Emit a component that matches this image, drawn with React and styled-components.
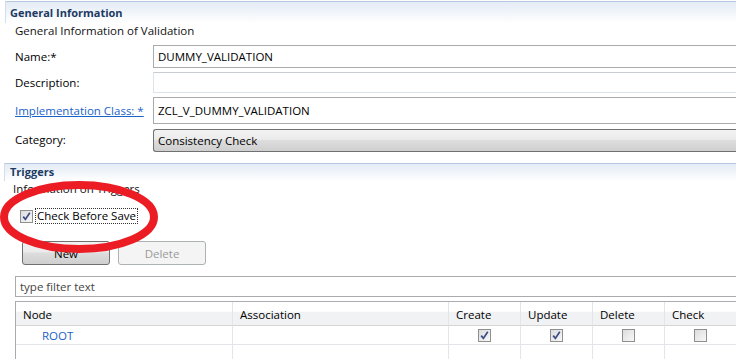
import React from 'react';
import styled, { createGlobalStyle } from 'styled-components';

const GlobalStyle = createGlobalStyle`
  html, body {
    margin: 0;
    padding: 0;
    background: #ffffff;
    overflow: hidden;
  }
  body {
    font-family: "Open Sans", "Noto Sans", sans-serif;
    font-size: 11.5px;
    color: #000000;
  }
`;

const Page = styled.div`
  position: relative;
  width: 736px;
  height: 359px;
  overflow: hidden;
  padding-top: 1px;
  box-sizing: border-box;
`;

const SectionHeader = styled.div`
  margin-left: ${(p) => p.$left}px;
  height: ${(p) => p.$height}px;
  padding-left: ${(p) => p.$pad}px;
  padding-top: ${(p) => p.$top}px;
  box-sizing: border-box;
  border-top: 1px solid #b6c9e2;
  border-left: 1px solid #d2deec;
  background: linear-gradient(to bottom, #e3ebf5 0%, #f4f7fb 60%, #ffffff 100%);
  font-weight: 700;
  font-size: 11px;
  line-height: 16px;
  color: #1c3a63;
`;

const Subtitle = styled.div`
  padding-left: ${(p) => p.$left}px;
  line-height: 16px;
  height: 16px;
  color: #111;
`;

const Form = styled.div`
  display: grid;
  grid-template-columns: 138px 1fr;
  row-gap: 4px;
  padding-left: 15px;
  margin-top: 6px;
  align-items: center;
`;

const Label = styled.div`
  line-height: 16px;
`;

const LinkLabel = styled.a`
  color: #1a63c6;
  text-decoration: underline;
  line-height: 16px;
  cursor: pointer;
`;

const TextBox = styled.div`
  height: ${(p) => p.$h}px;
  box-sizing: border-box;
  border: 1px solid ${(p) => (p.$light ? '#dde3ea' : '#a9abae')};
  border-top-color: ${(p) => (p.$light ? '#c9cdd2' : '#a9abae')};
  border-right: none;
  padding-left: 4px;
  display: flex;
  align-items: center;
  background: #fff;
`;

const Combo = styled.div`
  height: 23px;
  box-sizing: border-box;
  border: 1px solid #707070;
  border-right: none;
  border-radius: 3px 0 0 3px;
  padding-left: 4px;
  display: flex;
  align-items: center;
  margin-top: 1px;
  background: linear-gradient(to bottom, #f3f3f3 0%, #ebebeb 45%, #dddddd 50%, #cfcfcf 100%);
`;

const CheckRow = styled.div`
  display: flex;
  align-items: center;
  margin-top: 10px;
  margin-left: 20px;
  height: 18px;
  gap: 2px;
`;

const Box = styled.span`
  width: 13px;
  height: 13px;
  box-sizing: border-box;
  border: 1px solid #8e8f8f;
  background: linear-gradient(135deg, #dcdcdc 0%, #f8f8f8 100%);
  display: inline-flex;
  align-items: center;
  justify-content: center;
  padding: 1px;
`;

const FocusText = styled.span`
  border: 1px dotted #333;
  padding: 0 1px;
  line-height: 14px;
`;

const ButtonBar = styled.div`
  display: flex;
  gap: 8px;
  margin-top: 16px;
  margin-left: 22px;
`;

const Button = styled.div`
  width: 88px;
  height: 24px;
  box-sizing: border-box;
  border-radius: 3px;
  display: flex;
  align-items: center;
  justify-content: center;
  border: 1px solid ${(p) => (p.$disabled ? '#adb2b5' : '#707070')};
  color: ${(p) => (p.$disabled ? '#9a9a9a' : '#000')};
  background: ${(p) =>
    p.$disabled
      ? '#f4f4f4'
      : 'linear-gradient(to bottom, #f2f2f2 0%, #ebebeb 45%, #dddddd 50%, #cfcfcf 100%)'};
`;

const Filter = styled.div`
  margin: 11px 0 0 15px;
  height: 21px;
  box-sizing: border-box;
  border: 1px solid #a9abae;
  border-right: none;
  padding-left: 4px;
  display: flex;
  align-items: center;
  color: #444;
`;

const Table = styled.div`
  margin: 4px 0 0 15px;
  width: 730px;
  border: 1px solid #a9abae;
  border-right: none;
  border-bottom: none;
  display: grid;
  grid-template-columns: 217px 216px 72px 72px 72px 72px;
`;

const HeadCell = styled.div`
  height: 24px;
  box-sizing: border-box;
  padding: 2px 0 0 7px;
  display: flex;
  align-items: center;
  border-right: 1px solid #e3e5e8;
  border-bottom: 1px solid #d5d5d5;
  background: linear-gradient(to bottom, #ffffff 0%, #ffffff 40%, #f1f2f4 45%, #f1f2f4 100%);
`;

const Cell = styled.div`
  height: ${(p) => p.$h}px;
  box-sizing: border-box;
  border-right: 1px solid #e3e5e8;
  border-bottom: 1px solid #e3e5e8;
  display: flex;
  align-items: center;
  justify-content: ${(p) => (p.$center ? 'center' : 'flex-start')};
  padding-left: ${(p) => p.$pad || 0}px;
  color: ${(p) => p.$color || '#000'};
`;

const Annotation = styled.svg`
  position: absolute;
  left: 0;
  top: 176px;
  pointer-events: none;
`;

const Check = ({ checked }) => (
  <Box>
    {checked && (
      <svg width="9" height="9" viewBox="0 0 9 9">
        <path d="M1.2 4.6 L3.4 7.4 L7.8 0.8" fill="none" stroke="#3b4b86" strokeWidth="1.7" />
      </svg>
    )}
  </Box>
);

const columns = ['Node', 'Association', 'Create', 'Update', 'Delete', 'Check'];

const App = () => (
  <Page>
    <GlobalStyle />
    <SectionHeader $left={5} $height={22} $pad={4} $top={3}>General Information</SectionHeader>
    <Subtitle $left={15}>General Information of Validation</Subtitle>
    <Form>
      <Label>Name:*</Label>
      <TextBox $h={23}>DUMMY_VALIDATION</TextBox>
      <Label>Description:</Label>
      <TextBox $h={21} $light />
      <LinkLabel>Implementation Class: *</LinkLabel>
      <TextBox $h={27}>ZCL_V_DUMMY_VALIDATION</TextBox>
      <Label>Category:</Label>
      <Combo>Consistency Check</Combo>
    </Form>
    <div style={{ height: 11 }} />
    <SectionHeader $left={4} $height={18} $pad={5} $top={0}>Triggers</SectionHeader>
    <Subtitle $left={13}>Information on Triggers</Subtitle>
    <CheckRow>
      <Check checked />
      <FocusText>Check Before Save</FocusText>
    </CheckRow>
    <ButtonBar>
      <Button>New</Button>
      <Button $disabled>Delete</Button>
    </ButtonBar>
    <Filter>type filter text</Filter>
    <Table>
      {columns.map((c) => (
        <HeadCell key={c}>{c}</HeadCell>
      ))}
      <Cell $h={19} $pad={26} $color="#1c5fc4">ROOT</Cell>
      <Cell $h={19} />
      <Cell $h={19} $center><Check checked /></Cell>
      <Cell $h={19} $center><Check checked /></Cell>
      <Cell $h={19} $center><Check /></Cell>
      <Cell $h={19} $center><Check /></Cell>
      {columns.map((c) => (
        <Cell key={c} $h={20} />
      ))}
    </Table>
    <Annotation width="170" height="84" viewBox="0 0 170 84">
      <ellipse cx="79" cy="41" rx="75" ry="32" fill="none" stroke="#ec1c24" strokeWidth="8" />
    </Annotation>
  </Page>
);

export default App;
